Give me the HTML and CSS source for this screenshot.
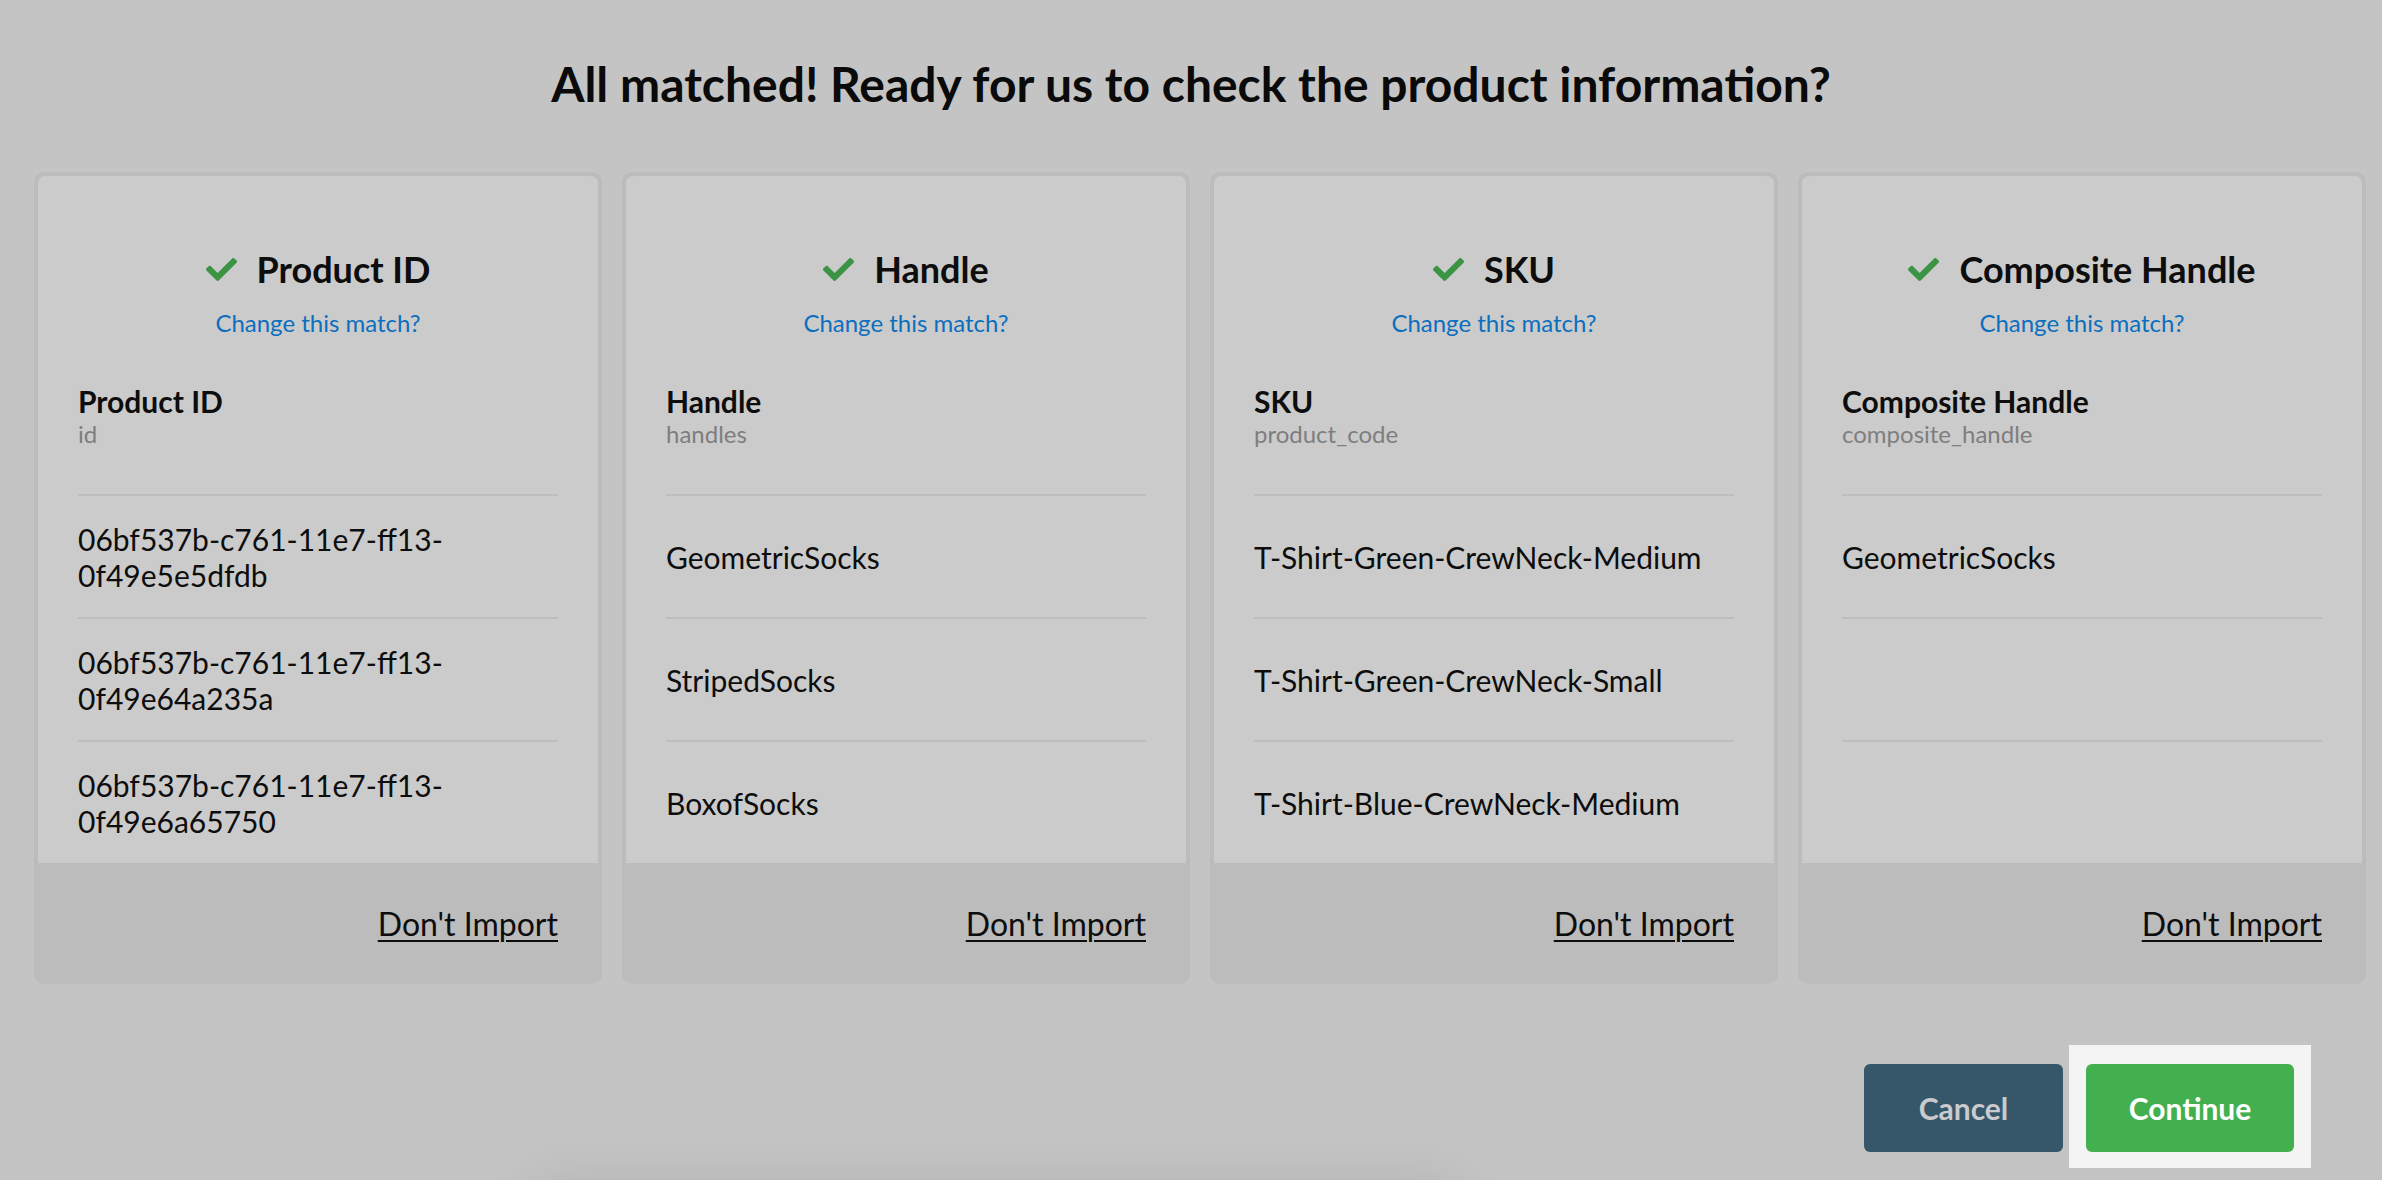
FILE: index.html
```html
<!DOCTYPE html>
<html>
<head>
<meta charset="utf-8">
<link rel="stylesheet" href="styles.css">
</head>
<body>
<div class="page">
  <h1 class="title">All matched! Ready for us to check the product information?</h1>
  <div class="cards">
    <div class="card">
      <div class="card-body">
        <div class="card-head">
          <div class="match"><svg class="check" viewBox="0 52 512 408"><path d="M173.898 439.404l-166.4-166.4c-9.997-9.997-9.997-26.206 0-36.204l36.203-36.204c9.997-9.998 26.207-9.998 36.204 0L192 312.69 432.095 72.596c9.997-9.997 26.207-9.997 36.204 0l36.203 36.204c9.997 9.997 9.997 26.206 0 36.204l-294.4 294.401c-9.998 9.997-26.207 9.997-36.204-.001z"/></svg><span class="match-name">Product ID</span></div>
          <a class="change">Change this match?</a>
        </div>
        <div class="field">
          <div class="field-name">Product ID</div>
          <div class="field-key">id</div>
        </div>
        <div class="rows">
          <div class="row"><span>06bf537b-c761-11e7-ff13-0f49e5e5dfdb</span></div>
          <div class="row"><span>06bf537b-c761-11e7-ff13-0f49e64a235a</span></div>
          <div class="row"><span>06bf537b-c761-11e7-ff13-0f49e6a65750</span></div>
        </div>
      </div>
      <div class="card-foot"><a class="dont">Don't Import</a></div>
    </div>
    <div class="card">
      <div class="card-body">
        <div class="card-head">
          <div class="match"><svg class="check" viewBox="0 52 512 408"><path d="M173.898 439.404l-166.4-166.4c-9.997-9.997-9.997-26.206 0-36.204l36.203-36.204c9.997-9.998 26.207-9.998 36.204 0L192 312.69 432.095 72.596c9.997-9.997 26.207-9.997 36.204 0l36.203 36.204c9.997 9.997 9.997 26.206 0 36.204l-294.4 294.401c-9.998 9.997-26.207 9.997-36.204-.001z"/></svg><span class="match-name">Handle</span></div>
          <a class="change">Change this match?</a>
        </div>
        <div class="field">
          <div class="field-name">Handle</div>
          <div class="field-key">handles</div>
        </div>
        <div class="rows">
          <div class="row"><span>GeometricSocks</span></div>
          <div class="row"><span>StripedSocks</span></div>
          <div class="row"><span>BoxofSocks</span></div>
        </div>
      </div>
      <div class="card-foot"><a class="dont">Don't Import</a></div>
    </div>
    <div class="card">
      <div class="card-body">
        <div class="card-head">
          <div class="match"><svg class="check" viewBox="0 52 512 408"><path d="M173.898 439.404l-166.4-166.4c-9.997-9.997-9.997-26.206 0-36.204l36.203-36.204c9.997-9.998 26.207-9.998 36.204 0L192 312.69 432.095 72.596c9.997-9.997 26.207-9.997 36.204 0l36.203 36.204c9.997 9.997 9.997 26.206 0 36.204l-294.4 294.401c-9.998 9.997-26.207 9.997-36.204-.001z"/></svg><span class="match-name">SKU</span></div>
          <a class="change">Change this match?</a>
        </div>
        <div class="field">
          <div class="field-name">SKU</div>
          <div class="field-key">product_code</div>
        </div>
        <div class="rows">
          <div class="row"><span>T-Shirt-Green-CrewNeck-Medium</span></div>
          <div class="row"><span>T-Shirt-Green-CrewNeck-Small</span></div>
          <div class="row"><span>T-Shirt-Blue-CrewNeck-Medium</span></div>
        </div>
      </div>
      <div class="card-foot"><a class="dont">Don't Import</a></div>
    </div>
    <div class="card">
      <div class="card-body">
        <div class="card-head">
          <div class="match"><svg class="check" viewBox="0 52 512 408"><path d="M173.898 439.404l-166.4-166.4c-9.997-9.997-9.997-26.206 0-36.204l36.203-36.204c9.997-9.998 26.207-9.998 36.204 0L192 312.69 432.095 72.596c9.997-9.997 26.207-9.997 36.204 0l36.203 36.204c9.997 9.997 9.997 26.206 0 36.204l-294.4 294.401c-9.998 9.997-26.207 9.997-36.204-.001z"/></svg><span class="match-name">Composite Handle</span></div>
          <a class="change">Change this match?</a>
        </div>
        <div class="field">
          <div class="field-name">Composite Handle</div>
          <div class="field-key">composite_handle</div>
        </div>
        <div class="rows">
          <div class="row"><span>GeometricSocks</span></div>
          <div class="row"><span></span></div>
          <div class="row"><span></span></div>
        </div>
      </div>
      <div class="card-foot"><a class="dont">Don't Import</a></div>
    </div>
  </div>
  <div class="actions">
    <button class="btn cancel">Cancel</button>
    <div class="spotlight"><button class="btn continue">Continue</button></div>
  </div>
  <div class="below"></div>
</div>
</body>
</html>
```

FILE: styles.css
```css
html, body {
  margin: 0;
  padding: 0;
  background: #c4c4c4;
  height: 100%;
  overflow: hidden;
}
body {
  font-family: Lato, "Open Sans", "Liberation Sans", sans-serif;
  color: #0d0d0d;
}
.page {
  padding-top: 55px;
}
.title {
  margin: 0;
  font-size: 48px;
  line-height: 58px;
  font-weight: 700;
  text-align: center;
  color: #0a0a0a;
}
.cards {
  display: grid;
  grid-template-columns: repeat(4, 568px);
  column-gap: 20px;
  margin-top: 59px;
  padding-left: 34px;
}
.card {
  background: #bcbcbc;
  border-radius: 10px;
  overflow: hidden;
  display: flex;
  flex-direction: column;
}
.card-body {
  margin: 4px 4px 0;
  background: #cbcbcb;
  border-radius: 7px 7px 0 0;
  padding: 71px 40px 0;
}
.card-head {
  text-align: center;
}
.match {
  display: flex;
  justify-content: center;
  align-items: center;
  gap: 20px;
  height: 44px;
}
.check {
  width: 31px;
  height: 25px;
  fill: #3a9444;
}
.match-name {
  font-size: 36px;
  font-weight: 700;
  line-height: 44px;
}
.change {
  display: block;
  margin-top: 17px;
  font-size: 24px;
  line-height: 30px;
  color: #0b6fbf;
}
.field {
  margin-top: 45px;
}
.field-name {
  font-size: 30px;
  font-weight: 700;
  line-height: 36px;
}
.field-key {
  font-size: 24px;
  line-height: 29px;
  color: #7e7e7e;
}
.rows {
  margin-top: 46px;
}
.row {
  border-top: 2px solid #bdbdbd;
  height: 121px;
  display: flex;
  align-items: center;
  font-size: 30px;
  line-height: 36px;
  color: #0d0d0d;
}
.card-foot {
  height: 121px;
  display: flex;
  align-items: center;
  justify-content: flex-end;
  padding-right: 44px;
}
.dont {
  font-size: 32px;
  color: #0d0d0d;
  text-decoration: underline;
  text-underline-offset: 4px;
  text-decoration-thickness: 2px;
}
.actions {
  display: flex;
  justify-content: flex-end;
  align-items: flex-start;
  margin-top: 61px;
  padding-right: 71px;
}
.btn {
  font-family: Lato, "Open Sans", "Liberation Sans", sans-serif;
  font-size: 30px;
  font-weight: 700;
  height: 88px;
  border: none;
  border-radius: 6px;
  padding: 0;
}
.cancel {
  width: 199px;
  background: #36566a;
  color: #c9cbcc;
  margin-top: 19px;
  margin-right: 6px;
}
.spotlight {
  background: #f4f4f4;
  padding: 19px 17px 16px;
}
.continue {
  width: 208px;
  background: #42b04f;
  color: #ffffff;
  display: block;
}
.below {
  margin: 30px auto 0 530px;
  width: 930px;
  height: 200px;
  border-radius: 30px;
  box-shadow: 0 -14px 60px rgba(0,0,0,0.1);
}
```
